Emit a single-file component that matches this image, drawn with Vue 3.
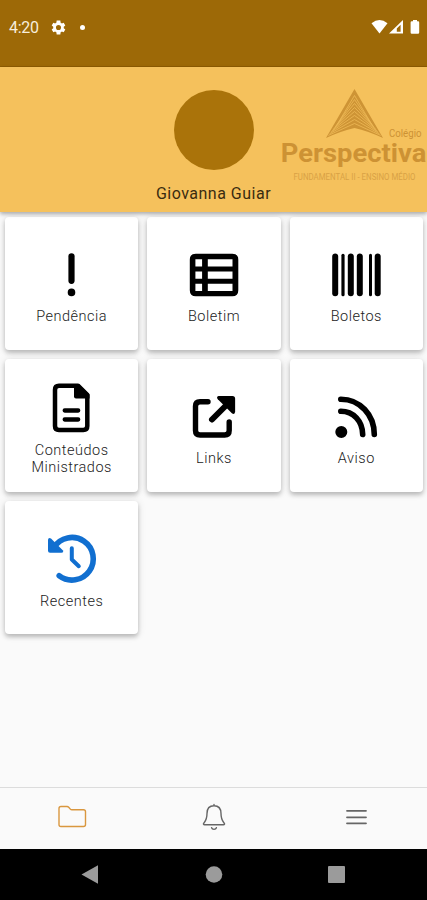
<template>
  <div class="phone">
    <div class="status">
      <span class="time">4:20</span>
      <svg class="gear" viewBox="0 0 24 24">
        <path fill-rule="evenodd" d="M19.4 13a7.500 7.500 0 0 0 0-2l2.200-1.700-2.300-4-2.600 1a7.500 7.500 0 0 0-1.700-1L14.600 2H9.400L9 5.300a7.500 7.500 0 0 0-1.700 1l-2.600-1-2.300 4L4.600 11a7.500 7.500 0 0 0 0 2l-2.200 1.700 2.300 4 2.600-1a7.500 7.500 0 0 0 1.700 1l.4 3.300h5.200l.4-3.300a7.500 7.500 0 0 0 1.700-1l2.600 1 2.300-4zM12 15.600a3.600 3.600 0 1 1 0-7.200 3.600 3.600 0 0 1 0 7.200z" />
      </svg>
      <span class="dot"></span>
      <svg class="signals" viewBox="0 0 50 16">
        <path d="M0.500 4.200Q8.500-2.200 16.500 4.200L8.500 14.500z" />
        <path fill-rule="evenodd" d="M18 14.500L32 1v13.500zM25.800 12.700h3.800V5.800l-3.800 3.700z" />
        <path d="M42 1h4v1.200h1.100q1.100 0 1.100 1.200v10q0 1.300-1.200 1.300h-6.200q-1.200 0-1.200-1.300v-10q0-1.200 1.200-1.200h1.200z" />
      </svg>
    </div>

    <header class="profile">
      <div class="user">
        <div class="avatar"></div>
        <div class="name">Giovanna Guiar</div>
      </div>
      <svg class="logo" viewBox="0 0 150 110">
        <path class="logo-fill" d="M77.500 9L106 58Q91 51 77.500 48Q64 51 49 58z" />
        <g class="logo-lines">
          <path v-for="n in 8" :key="n" :d="chevron(n)" />
        </g>
        <text x="112" y="57" font-size="11.500" textLength="32.500" lengthAdjust="spacingAndGlyphs">Colégio</text>
        <text class="brand" x="3.800" y="82" font-size="25" textLength="145.500" lengthAdjust="spacingAndGlyphs">Perspectiva</text>
        <text class="levels" x="16.500" y="100" font-size="8.200" textLength="122" lengthAdjust="spacingAndGlyphs">FUNDAMENTAL II - ENSINO MÉDIO</text>
      </svg>
    </header>

    <main class="grid">
      <div v-for="item in items" :key="item.label" class="cell">
        <div class="card">
          <svg class="icon" :class="item.color" viewBox="0 0 60 48">
            <path v-for="(d, i) in item.fill" :key="'f' + i" class="solid" :d="d" />
            <path v-for="(s, i) in item.stroke" :key="'s' + i" class="line" :d="s.d" :stroke-width="s.w" />
          </svg>
          <div class="label">{{ item.label }}</div>
        </div>
      </div>
    </main>

    <nav class="tabs">
      <a class="tab active">
        <svg viewBox="0 0 32 32">
          <path d="M3 23.500V7.500q0-2 2-2h6q1 0 1.700.8l1.600 1.800q.6.700 1.700.7H27.500q2 0 2 2v12.700q0 2-2 2H5q-2 0-2-2z" />
        </svg>
      </a>
      <a class="tab">
        <svg viewBox="0 0 32 32">
          <path d="M16 3.500v1.300M16 4.800c-4.800 0-7 3.200-7 7.700 0 6-1.400 7.400-3.100 9.500-.9 1.100-.4 1.800.7 1.800h18.800c1.100 0 1.600-.7.700-1.800-1.700-2.100-3.100-3.500-3.100-9.500 0-4.500-2.200-7.700-7-7.700zM13.600 26.700c.6 2.200 4.200 2.200 4.800 0" />
        </svg>
      </a>
      <a class="tab">
        <svg class="menu" viewBox="0 0 32 32">
          <path d="M7 9.800h19M7 16.300h19M7 22.300h19" />
        </svg>
      </a>
    </nav>

    <div class="system">
      <svg viewBox="0 0 427 50">
        <path d="M81.500 25.500L98 16.300v18.400z" />
        <circle cx="214" cy="25.500" r="8.300" />
        <rect x="328" y="17" width="17" height="17" rx="1" />
      </svg>
    </div>
  </div>
</template>

<script setup>
const items = [
  {
    label: 'Pendência',
    fill: ['M25.700 41.400a3.800 3.800 0 1 0 7.600 0a3.800 3.800 0 1 0-7.600 0z'],
    stroke: [{ d: 'M29.500 5.300V29.800', w: 6.2 }],
  },
  {
    label: 'Boletim',
    fill: ['M11.800 2.700H48.300q6 0 6 6V39.200q0 6-6 6H11.800q-6 0-6-6V8.700q0-6 6-6zM11.400 8.200v7.300h6.700V8.200zM23.800 8.200v7.300h24.700V8.200zM11.400 20.500v7.300h6.700v-7.300zM23.800 20.500v7.300h24.700v-7.300zM11.400 32.700V40h6.700v-7.300zM23.800 32.700V40h24.700v-7.300z'],
  },
  {
    label: 'Boletos',
    stroke: [
      { d: 'M9.200 5.500V42.300', w: 6 },
      { d: 'M17 4.300V43.700', w: 3.2 },
      { d: 'M24.800 5.500V42.300', w: 6 },
      { d: 'M33.800 5.500V42.300', w: 6 },
      { d: 'M44.500 4.300V43.700', w: 3 },
      { d: 'M51.700 5.500V42.300', w: 6 },
    ],
  },
  {
    label: 'Conteúdos Ministrados',
    fill: ['M32 -1H36.500L47.500 9.500V13.500H34q-2 0-2-2z'],
    stroke: [
      { d: 'M17 .7H36L45.300 9.800V41q0 4-4 4H17q-4 0-4-4V4.700q0-4 4-4z', w: 4.5 },
      { d: 'M22.700 25.500H36.200M22.700 34.500H36.200', w: 4.3 },
    ],
  },
  {
    label: 'Links',
    fill: ['M34.500 3H48.500q2.600 0 2.600 2.600V19q-.6 3-3.200 1.300L33.800 6.300Q32 4 34.500 3z'],
    stroke: [
      { d: 'M24 8.700H16q-4.500 0-4.500 4.500V37.500q0 4.500 4.500 4.500H40.700q4.500 0 4.500-4.500V29', w: 5.4 },
      { d: 'M28 26.500L43 11.500', w: 6 },
    ],
  },
  {
    label: 'Aviso',
    fill: ['M9.300 39a6 6 0 1 0 12 0a6 6 0 1 0-12 0z'],
    stroke: [
      { d: 'M14.800 18.300C27.500 18.300 36.500 28 36.700 41.500', w: 5.6 },
      { d: 'M14.800 6.200C34 6.200 48.300 22 48.300 41.500', w: 5.6 },
    ],
  },
  {
    label: 'Recentes',
    color: 'blue',
    fill: ['M6 3.500Q6.500 1 9 2.500L21 14.500Q21.700 16.700 19.500 16.700H8Q6 16.700 6 14.700z'],
    stroke: [
      { d: 'M12 11.300A21.300 21.300 0 1 1 17.200 39.800', w: 5.6 },
      { d: 'M29.800 12.200V23.500L36.800 30.200', w: 4 },
    ],
  },
]

// nested chevrons inside the logo triangle, steeper towards the top
function chevron(n) {
  const half = 27.5 - n * 1.3
  const top = 47.5 - n * 4
  const base = 57 - n * 1.6
  return `M${77.5 - half} ${base}L77.5 ${top}L${77.5 + half} ${base}`
}
</script>

<style>
body {
  margin: 0;
  background: #fafafa;
}
</style>

<style scoped>
.phone {
  width: 427px;
  height: 900px;
  display: flex;
  flex-direction: column;
  overflow: hidden;
  background: #fafafa;
  font-family: Roboto, sans-serif;
}
.status {
  height: 67px;
  flex: none;
  box-sizing: border-box;
  padding: 0 6px 12px 9px;
  display: flex;
  align-items: center;
  background: #9d6907;
  border-bottom: 1px solid #8e5c02;
  color: #f7eddc;
}
.status svg {
  fill: #fff;
}
.time {
  width: 31px;
  padding-top: 1px;
  font-size: 16px;
  letter-spacing: -0.3px;
}
.gear {
  width: 17px;
  height: 17px;
  margin-left: 10px;
}
.dot {
  width: 5px;
  height: 5px;
  margin-left: 13px;
  border-radius: 50%;
  background: #fff;
}
.signals {
  width: 50px;
  height: 16px;
  margin-left: auto;
}
.profile {
  height: 145px;
  flex: none;
  display: grid;
  position: relative;
  background: #f5c15c;
  box-shadow: 0 2px 4px rgba(0, 0, 0, 0.32);
}
.user {
  grid-area: 1 / 1;
  padding-top: 23px;
  display: flex;
  flex-direction: column;
  align-items: center;
}
.avatar {
  width: 80px;
  height: 80px;
  border-radius: 50%;
  background: #aa730a;
}
.name {
  margin-top: 14px;
  font-size: 16px;
  line-height: 20px;
  letter-spacing: 0.5px;
  color: #3a2c10;
}
.logo {
  grid-area: 1 / 1;
  justify-self: end;
  width: 150px;
  height: 110px;
  margin-top: 13px;
  fill: #cd9234;
}
.logo-fill {
  fill: #ce9435;
}
.logo-lines {
  fill: none;
  stroke: #efba57;
  stroke-width: 0.8;
}
.brand {
  font-weight: 700;
}
.levels {
  fill: #d9a145;
}
.grid {
  flex: 1;
  display: grid;
  grid-template-columns: repeat(3, 1fr);
  grid-auto-rows: 142.300px;
  align-content: start;
}
.cell {
  padding: 4.700px 4px 4.500px 5px;
  display: flex;
}
.card {
  flex: 1;
  display: flex;
  flex-direction: column;
  align-items: center;
  justify-content: center;
  background: #fff;
  border-radius: 4px;
  box-shadow: 0 3px 4px rgba(0, 0, 0, 0.2), 0 1px 8px rgba(0, 0, 0, 0.12);
}
.icon {
  width: 60px;
  height: 48px;
  margin: 9.500px 0 9px;
  overflow: visible;
  color: #000;
}
.icon.blue {
  color: #116fd0;
}
.solid {
  fill: currentColor;
  fill-rule: evenodd;
}
.line {
  fill: none;
  stroke: currentColor;
  stroke-linecap: round;
  stroke-linejoin: round;
}
.label {
  width: 100px;
  font-size: 14.500px;
  font-weight: 300;
  line-height: 17px;
  letter-spacing: 0.5px;
  text-align: center;
  color: #222;
}
.tabs {
  height: 62px;
  flex: none;
  box-sizing: border-box;
  padding: 0 0 3px 1px;
  display: grid;
  grid-template-columns: repeat(3, 1fr);
  border-top: 1.500px solid #dcdcdc;
}
.tab {
  display: flex;
  align-items: center;
  justify-content: center;
}
.tab svg {
  width: 32px;
  height: 32px;
  fill: none;
  stroke: #666;
  stroke-width: 1.4;
  stroke-linecap: round;
  stroke-linejoin: round;
}
.tab.active svg {
  stroke: #d9973f;
}
.tab svg.menu {
  stroke-width: 1.8;
}
.system {
  height: 51px;
  flex: none;
  background: #000;
}
.system svg {
  display: block;
  width: 427px;
  height: 50px;
  fill: #9b9b9b;
}
</style>
